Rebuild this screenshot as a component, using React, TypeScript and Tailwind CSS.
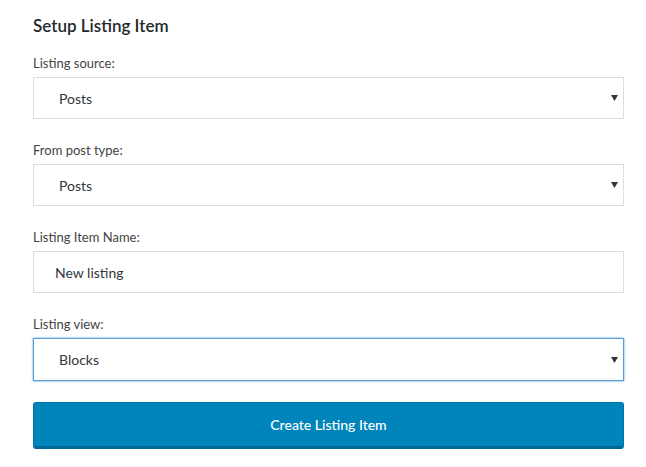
import React from 'react';

const font = { fontFamily: 'Lato, "Noto Sans", sans-serif' };

function Arrow() {
  return (
    <svg
      className="pointer-events-none absolute right-[6px] top-1/2 -translate-y-1/2"
      width="7"
      height="6"
      viewBox="0 0 7 6"
    >
      <path d="M0 0h7L3.5 6z" fill="#32373c" />
    </svg>
  );
}

function SelectField({ label, value, focused }: { label: string; value: string; focused?: boolean }) {
  return (
    <div className="flex flex-col">
      <label className="text-[13px] leading-[18px] text-[#444] mb-[5px]">{label}</label>
      <div className="relative">
        <select
          defaultValue={value}
          className={
            focused
              ? 'w-full h-[43px] appearance-none bg-white border border-[#5b9dd9] shadow-[0_0_2px_rgba(30,140,190,0.8)] pl-[25px] text-[14px] text-[#32373c] outline-none'
              : 'w-full h-[42px] appearance-none bg-white border border-[#ddd] pl-[25px] text-[14px] text-[#32373c] outline-none'
          }
          style={font}
        >
          <option>{value}</option>
        </select>
        <Arrow />
      </div>
    </div>
  );
}

export default function App() {
  return (
    <div className="min-h-screen bg-white pl-[33px] pr-[22px] pt-[14px]" style={font}>
      <h2 className="text-[17px] leading-[24px] font-semibold text-[#23282d] mb-[16px]">Setup Listing Item</h2>

      <div className="flex flex-col gap-[22px]">
        <SelectField label="Listing source:" value="Posts" />
        <SelectField label="From post type:" value="Posts" />

        <div className="flex flex-col">
          <label className="text-[13px] leading-[18px] text-[#444] mb-[5px]">Listing Item Name:</label>
          <input
            defaultValue="New listing"
            className="w-full h-[42px] bg-white border border-[#ddd] pl-[21px] text-[14px] text-[#32373c] outline-none"
            style={font}
          />
        </div>

        <SelectField label="Listing view:" value="Blocks" focused />
      </div>

      <button
        className="mt-[21px] w-full h-[47px] rounded-[3px] bg-[#0085ba] border border-[#0073aa] border-b-[3px] border-b-[#006799] text-white text-[14px] font-medium"
        style={font}
      >
        Create Listing Item
      </button>
    </div>
  );
}
